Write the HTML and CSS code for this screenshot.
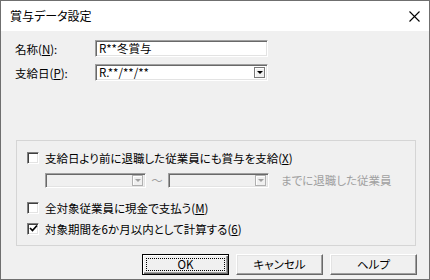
FILE: index.html
```html
<!DOCTYPE html>
<html lang="ja">
<head>
  <meta charset="UTF-8" />
  <title>賞与データ設定</title>
  <link rel="stylesheet" href="styles.css">
</head>
<body>
  <div class="window">

    <!-- Title bar -->
    <div class="titlebar">
      <span class="title">賞与データ設定</span>
      <svg class="close" width="11" height="11" viewBox="0 0 11 11">
        <path d="M0.5 0.5 L10.5 10.5 M10.5 0.5 L0.5 10.5" stroke="#000" stroke-width="1.1" fill="none" />
      </svg>
    </div>

    <div class="content">
      <!-- Fields -->
      <div class="field">
        <label class="field-label">名称(<u>N</u>):</label>
        <div class="textbox">R**冬賞与</div>
      </div>
      <div class="field">
        <label class="field-label">支給日(<u>P</u>):</label>
        <div class="textbox combo">
          <span>R.**/**/**</span>
          <span class="drop"><span class="arrow"></span></span>
        </div>
      </div>

      <!-- Options group -->
      <div class="group">
        <div class="check-row">
          <span class="checkbox"></span>
          <span>支給日より前に退職した従業員にも賞与を支給(<u>X</u>)</span>
        </div>
        <div class="range-row">
          <div class="textbox combo disabled small">
            <span></span>
            <span class="drop"><span class="arrow"></span></span>
          </div>
          <span class="tilde">～</span>
          <div class="textbox combo disabled small">
            <span></span>
            <span class="drop"><span class="arrow"></span></span>
          </div>
          <span class="disabled-text">までに退職した従業員</span>
        </div>
        <div class="check-row row3">
          <span class="checkbox"></span>
          <span>全対象従業員に現金で支払う(<u>M</u>)</span>
        </div>
        <div class="check-row row4">
          <span class="checkbox">
            <svg width="9" height="9" viewBox="0 0 9 9">
              <path d="M1 4 L3.5 6.5 L8 1.5" stroke="#000" stroke-width="1.7" fill="none" />
            </svg>
          </span>
          <span>対象期間を6か月以内として計算する(<u>6</u>)</span>
        </div>
      </div>

      <!-- Buttons -->
      <div class="buttons">
        <button class="btn default"><span class="focus">OK</span></button>
        <button class="btn">キャンセル</button>
        <button class="btn">ヘルプ</button>
      </div>
    </div>

  </div>
</body>
</html>
```

FILE: styles.css
```css
html, body {
  margin: 0;
  height: 100%;
  overflow: hidden;
  background: #f0f0f0;
}

body {
  font-family: "Noto Sans CJK JP", "Noto Sans", sans-serif;
  font-size: 11.5px;
  font-feature-settings: "palt";
  color: #000;
}

u {
  text-decoration: underline;
  text-underline-offset: 1px;
}

.window {
  width: 430px;
  height: 280px;
  box-sizing: border-box;
  border: 1px solid #6f6f6f;
  background: #f0f0f0;
  display: flex;
  flex-direction: column;
}

.titlebar {
  height: 30px;
  background: #fff;
  display: flex;
  align-items: center;
  justify-content: space-between;
  padding: 0 9px 0 9px;
}

.title {
  font-size: 12px;
  line-height: 14px;
}

.close {
  display: block;
}

.content {
  flex: 1;
  padding: 9px 12px 0 14px;
  display: flex;
  flex-direction: column;
}

.field {
  display: flex;
  align-items: center;
  height: 17px;
  margin-bottom: 7px;
}

.field-label {
  width: 80px;
  line-height: 14px;
}

.textbox {
  width: 173px;
  height: 17px;
  box-sizing: border-box;
  background: #fff;
  border: 1px solid;
  border-color: #a0a0a0 #fff #fff #a0a0a0;
  box-shadow: inset 1px 1px #696969, inset -1px -1px #e3e3e3;
  padding: 0 3px;
  line-height: 15px;
  white-space: nowrap;
}

.combo {
  display: flex;
  align-items: center;
  justify-content: space-between;
  padding-right: 2px;
}

.drop {
  width: 11px;
  height: 11px;
  box-sizing: border-box;
  border: 1px solid #7a7a7a;
  background: #f0f0f0;
  box-shadow: inset 1px 1px #fff;
  display: flex;
  align-items: center;
  justify-content: center;
}

.arrow {
  width: 0;
  height: 0;
  border-left: 3px solid transparent;
  border-right: 3px solid transparent;
  border-top: 3px solid #000;
}

.group {
  margin: 52px 0 0 1px;
  width: 400px;
  height: 106px;
  box-sizing: border-box;
  border: 1px solid #d5d5d5;
  padding: 8px 0 0 10px;
}

.check-row {
  display: flex;
  align-items: center;
  gap: 6px;
  height: 17px;
  line-height: 14px;
  white-space: nowrap;
}

.row3 {
  margin-top: 11px;
}

.row4 {
  margin-top: 4px;
}

.checkbox {
  width: 12px;
  height: 12px;
  box-sizing: border-box;
  background: #fff;
  border: 1px solid;
  border-color: #808080 #fff #fff #808080;
  box-shadow: inset 1px 1px #404040, inset -1px -1px #e3e3e3;
  display: flex;
  align-items: center;
  justify-content: center;
}

.range-row {
  display: flex;
  align-items: center;
  margin: 6px 0 0 18px;
  height: 16px;
  white-space: nowrap;
}

.textbox.small {
  width: 101px;
  height: 15px;
  background: #f0f0f0;
}

.disabled .drop {
  border-color: #b0b0b0;
}

.disabled .arrow {
  border-top-color: #a0a0a0;
}

.tilde {
  width: 22px;
  text-align: center;
  color: #a0a0a0;
}

.disabled-text {
  margin-left: 12px;
  color: #a0a0a0;
}

.buttons {
  display: flex;
  justify-content: flex-end;
  gap: 7px;
  margin-top: 8px;
}

.btn {
  width: 87px;
  height: 21px;
  box-sizing: border-box;
  margin: 0;
  padding: 0;
  font: inherit;
  font-feature-settings: "palt";
  color: #000;
  background: #f0f0f0;
  border: 1px solid;
  border-color: #fff #696969 #696969 #fff;
  box-shadow: inset -1px -1px #a0a0a0, inset 1px 1px #e3e3e3;
  line-height: 17px;
}

.btn.default {
  border: 1px solid #000;
  box-shadow: inset 1px 1px #fff, inset -1px -1px #696969, inset -2px -2px #a0a0a0;
  padding: 3px;
  display: flex;
}

.focus {
  flex: 1;
  border: 1px dotted #000;
  line-height: 11px;
}
```
